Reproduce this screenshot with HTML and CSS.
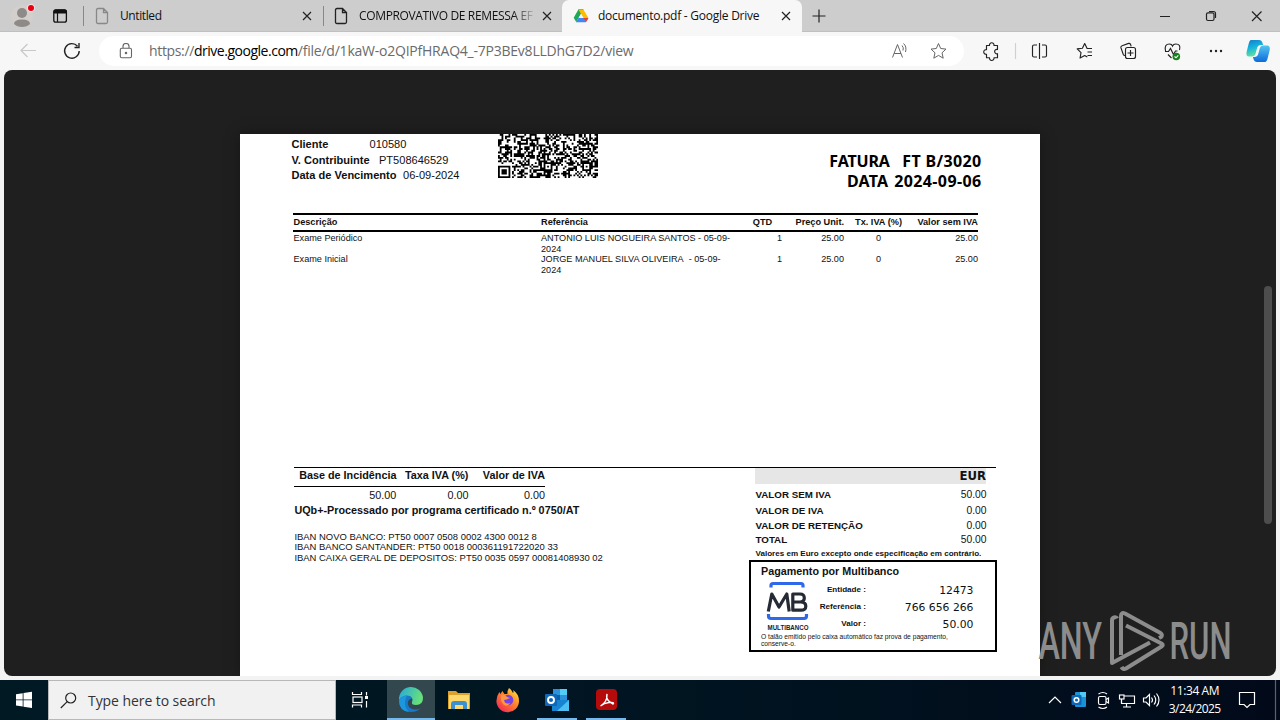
FILE: index.html
```html
<!DOCTYPE html>
<html lang="en">
<head>
<meta charset="utf-8">
<title>documento.pdf - Google Drive</title>
<link rel="stylesheet" href="styles.css">
</head>
<body>
<header class="tabs">
  <svg class="profile" width="50" height="32" viewBox="0 0 50 32"><circle cx="22" cy="16" r="11" fill="#d2cfcd"/><circle cx="22" cy="13" r="5" fill="#8d8a87"/><path d="M14 24q0-4.500 8-4.500t8 4.500q-3 3-8 3t-8-3z" fill="#8d8a87"/><circle cx="31" cy="8" r="4.200" fill="#f2dcdc"/><circle cx="31" cy="8" r="3" fill="#e60012"/></svg>
  <svg class="workspaces" width="33" height="32" viewBox="50 0 33 32"><rect x="53.800" y="9.800" width="12.600" height="12.400" rx="2" fill="none" stroke="#111" stroke-width="1.300"/><path d="M54 13V11.500q0-1.500 1.500-1.500h9.500q1.500 0 1.500 1.500V13z" fill="#111" stroke="#111"/><path d="M57.500 13v9" stroke="#111" stroke-width="1.200"/></svg>
  <div class="tab tab-first">
    <svg class="doc faded" width="14" height="18" viewBox="0 0 14 18"><path d="M1.500 3q0-1.500 1.500-1.500h5.500l4 4V15q0 1.500-1.500 1.500H3Q1.500 16.500 1.500 15zM8.500 1.500v4h4"/></svg>
    <span class="tab-title t-untitled">Untitled</span>
    <svg class="close" width="10" height="10" viewBox="0 0 10 10"><path d="M1 1l8 8M9 1L1 9"/></svg>
  </div>
  <div class="tab tab-second">
    <svg class="doc" width="14" height="18" viewBox="0 0 14 18"><path d="M1.500 3q0-1.500 1.500-1.500h5.500l4 4V15q0 1.500-1.500 1.500H3Q1.500 16.500 1.500 15zM8.500 1.500v4h4"/></svg>
    <span class="tab-title t-comp">COMPROVATIVO DE REMESSA EF</span>
    <svg class="close" width="10" height="10" viewBox="0 0 10 10"><path d="M1 1l8 8M9 1L1 9"/></svg>
  </div>
  <div class="tab tab-active">
    <svg class="drive" width="16" height="14" viewBox="0 0 16 14"><path d="M5.400.500h5L8 4.800 3.200 13 .7 8.800z" fill="#1fa855"/><path d="M5.400.500h5L8 4.800z" fill="#188038"/><path d="M10.400.500l5 8.500h-5L5.400.500z" fill="#fbbc04"/><path d="M15.400 9l-2.500 4.300h-10L5.400 9z" fill="#4285f4"/><path d="M15.400 9l-2 3.500L10.400 9z" fill="#ea4335"/><path d="M8 5l2.400 4h-4.800z" fill="#f7f7f7"/></svg>
    <span class="tab-title t-drive">documento.pdf - Google Drive</span>
    <svg class="close" width="10" height="10" viewBox="0 0 10 10"><path d="M1 1l8 8M9 1L1 9"/></svg>
  </div>
  <svg class="plus" width="14" height="14" viewBox="0 0 14 14"><path d="M7 .5v13M.5 7h13"/></svg>
  <svg class="winctl" width="140" height="32" viewBox="1140 0 140 32"><path d="M1160 16.500h10M1252 11.500l9.500 9.500M1261.500 11.500l-9.500 9.500"/><rect x="1206.500" y="12.800" width="7.500" height="7.700" rx="1.500"/><path d="M1209 11.500h4.500q2 0 2 2v4.500"/></svg>
</header>

<nav class="toolbar">
  <svg class="nav-icons" width="99" height="38" viewBox="0 32 99 38" fill="none"><path d="M36 50.500H21m6.500-6.500L21 50.500l6.500 6.500" stroke="#c8c8c8" stroke-width="1.200"/><path d="M77.500 46.200A7.300 7.300 0 1 0 79.200 51M79 43v4.500h-4.500" stroke="#222" stroke-width="1.400"/></svg>
  <div class="address">
    <svg width="14" height="16" viewBox="0 0 14 16" fill="none" stroke="#666" stroke-width="1.100"><rect x="1.300" y="5.300" width="11.200" height="9.400" rx="1.500"/><path d="M4 5V3.500a3 3 0 0 1 6 0V5"/><circle cx="7" cy="10" r=".7" fill="#666"/></svg>
    <div class="url"><span class="u1">https://</span><span class="host">drive.google.com</span><span class="u2">/file/d/1kaW-o2QIPfHRAQ4_-7P3BEv8LLDhG7D2/view</span></div>
    <svg width="60" height="20" viewBox="888 41 60 20" fill="none" stroke="#666"><path d="M891.500 57.500l5-13 5 13M893.200 53.500h6.800M901 45.500q2 2 1 5M902.500 43.500q3.500 3 2 8.500"/><path d="M937.500 43.500l2.200 5 5.300.6-4 3.700 1.200 5.400-4.700-2.800-4.700 2.800 1.200-5.400-4-3.700 5.300-.6z" stroke-linejoin="round"/></svg>
  </div>
  <svg class="tool-icons" width="316" height="38" viewBox="964 32 316 38" fill="none" stroke="#222" stroke-width="1.150">
    <defs><linearGradient id="cp1" x1="0" y1="0" x2="0.300" y2="1"><stop stop-color="#1878cc"/><stop offset=".5" stop-color="#13b4dc"/><stop offset="1" stop-color="#65e09f"/></linearGradient><linearGradient id="cp2" x1="0" y1="0" x2="0" y2="1"><stop stop-color="#55c4ef"/><stop offset="1" stop-color="#0d6bdc"/></linearGradient></defs>
    <path d="M986.500 45.500h3a2.300 2.300 0 1 1 4.500 0h3.500v4a2.200 2.200 0 1 0 0 4.200v4h-3.500a2.300 2.300 0 1 1-4.500 0h-3v-3.500a2.300 2.300 0 1 1 0-4.500z" stroke-linejoin="round"/>
    <path d="M1015.500 43v16" stroke="#d0d0d0"/>
    <path d="M1037 45h-3q-1.500 0-1.500 1.500v9q0 1.500 1.500 1.500h3M1042 45h3q1.500 0 1.500 1.500v9q0 1.500-1.500 1.500h-3M1039.500 43v16"/>
    <path d="M1089.500 48.500l-2.500-.3-2.300-4.700-2.300 4.700-5.200.7 3.800 3.700-.9 5.400 4.600-2.500 2.600 1.500M1086.500 48.500h5.500M1087.500 52h4.500M1087.500 55.500h4.500" stroke-linejoin="round"/>
    <path d="M1125 55.500q-1.300-.1-1.800-1.300l-2.300-6.500q-.3-1.500 1.200-2l6.500-2.300q1.400-.3 2 1l.5 2"/><rect x="1125.500" y="47.500" width="10" height="11" rx="2"/><path d="M1130.500 50v6M1127.500 53h6"/>
    <path d="M1165.500 51q-1.500-7 4-7 2.300 0 3 2 .9-2 3.300-2 5.400 0 3.700 6M1165 51.500h3.500l2-3 3 6 2-3.500h2M1168 54.500l3.500 3.500"/><circle cx="1176.300" cy="56.500" r="3.800" fill="#16811b" stroke="none"/><path d="M1174.500 56.500l1.500 1.300 2.300-2.500" stroke="#fff"/>
    <g fill="#222" stroke="none"><circle cx="1211" cy="51" r="1.200"/><circle cx="1216" cy="51" r="1.200"/><circle cx="1221" cy="51" r="1.200"/></g>
    <g stroke="none"><path d="M1251 40h8q2.700 0 3.500 3l.6 2h-2.200q-3 0-3.800 3l-1.500 5.500q-.8 3-3.600 3h-3q-3.200 0-2.400-4.500l2-8q1-4 2.400-4z" fill="url(#cp1)"/><path d="M1265 62h-8q-2.700 0-3.500-3l-.6-2h1.500q3 0 3.800-3l1.500-5.500q.8-3 3.600-3h3.700q3.500 0 2.700 4.500l-2 8q-1 4-2.700 4z" fill="url(#cp2)"/></g>
  </svg>
</nav>

<main class="viewer">
  <article class="page">
    <section class="top">
      <div class="client">
        <p><b class="k-client">Cliente</b><span>010580</span></p>
        <p><b class="k-contrib">V. Contribuinte</b><span>PT508646529</span></p>
        <p><b class="k-due">Data de Vencimento</b><span>06-09-2024</span></p>
      </div>
      <svg class="qr" id="qr" width="100" height="44" viewBox="0 32 57 25" preserveAspectRatio="none"></svg>
      <div class="doc-title"><p><span class="ft1">FATURA</span><span class="ft2">FT B/3020</span></p><p><span class="dt1">DATA</span><span class="dt2">2024-09-06</span></p></div>
    </section>
    <section class="items">
      <div class="item head"><span>Descrição</span><span>Referência</span><span class="mid">QTD</span><span class="r">Preço Unit.</span><span class="r">Tx. IVA (%)</span><span class="r">Valor sem IVA</span></div>
      <div class="item"><span>Exame Periódico</span><span>ANTONIO LUIS NOGUEIRA SANTOS - 05-09-<br>2024</span><span class="r qty">1</span><span class="r">25.00</span><span class="r tax">0</span><span class="r">25.00</span></div>
      <div class="item"><span>Exame Inicial</span><span>JORGE MANUEL SILVA OLIVEIRA&nbsp; - 05-09-<br>2024</span><span class="r qty">1</span><span class="r">25.00</span><span class="r tax">0</span><span class="r">25.00</span></div>
    </section>
    <section class="bottom">
      <div class="left">
        <div class="vat head"><b>Base de Incidência</b><b>Taxa IVA (%)</b><b>Valor de IVA</b></div>
        <div class="vat"><span>50.00</span><span>0.00</span><span>0.00</span></div>
        <p class="cert">UQb+-Processado por programa certificado n.º 0750/AT</p>
        <div class="iban">IBAN NOVO BANCO: PT50 0007 0508 0002 4300 0012 8<br>IBAN BANCO SANTANDER: PT50 0018 000361191722020 33<br>IBAN CAIXA GERAL DE DEPOSITOS: PT50 0035 0597 00081408930 02</div>
      </div>
      <div class="right">
        <div class="eur">EUR</div>
        <div class="totals">
          <p><b>VALOR SEM IVA</b><span>50.00</span></p>
          <p><b>VALOR DE IVA</b><span>0.00</span></p>
          <p><b>VALOR DE RETENÇÃO</b><span>0.00</span></p>
          <p class="last"><b>TOTAL</b><span>50.00</span></p>
        </div>
        <p class="note">Valores em Euro excepto onde especificação em contrário.</p>
        <div class="pay">
          <h2>Pagamento por Multibanco</h2>
          <div class="pay-body">
            <svg class="mb" width="44" height="51" viewBox="0 0 44 51"><path d="M5 7.500V5.500q0-2 2-2h28q2 0 2 2v2M2.500 34v2q0 2.500 2.500 2.500h33q2.500 0 2.500-2.500v-2" fill="none" stroke="#2f68e8" stroke-width="3.200"/><path d="M2.300 31.500L5.800 14 13 27 20.800 14l2.400 17.500M26.800 14h7.200q4.300 0 4.300 4t-4.300 4h-7.200h8q5 0 5 4.200t-5 4h-8z" fill="none" stroke="#262a35" stroke-width="3.200" stroke-linejoin="round"/><text x="1.500" y="50" textLength="41" lengthAdjust="spacingAndGlyphs" class="mbt">MULTIBANCO</text></svg>
            <div class="pay-rows"><p><b>Entidade :</b><span>12473</span></p><p><b>Referência :</b><span>766 656 266</span></p><p><b>Valor :</b><span>50.00</span></p></div>
          </div>
          <p class="foot">O talão emitido pelo caixa automático faz prova de pagamento,<br>conserve-o.</p>
        </div>
      </div>
    </section>
  </article>
  <div class="thumb"></div>
  <svg class="watermark" width="220" height="70" viewBox="1030 606 220 70">
    <g class="wm"><text x="1038.500" y="659" textLength="63.500" lengthAdjust="spacingAndGlyphs">ANY</text><text x="1169.500" y="659" textLength="62" lengthAdjust="spacingAndGlyphs">RUN</text></g>
    <g fill="none" stroke="#8c8c8c" stroke-width="4" stroke-linejoin="round"><path d="M1117 618.500q-.5-1.500-3-1-2 .5-2 3V663l38-20.500"/><path d="M1121 655v-39q0-4 4-2.500l35.500 19.500q2.500 2 .5 4l-2 1"/><path d="M1126 625.500l35.500 18q2.500 1.500 0 3L1126 668.500q-3 1.500-4.500-1.500"/></g>
  </svg>
</main>

<footer class="taskbar">
  <svg class="start" width="48" height="40" viewBox="0 0 48 40"><path d="M16 14.200l6.700-1v6.200H16zM23.500 13l8.500-1.200v7.600h-8.500zM16 20.300h6.700v6.200l-6.700-1zM23.500 20.300H32v7.700l-8.500-1.200z" fill="#fff"/></svg>
  <div class="search"><svg width="17" height="17" viewBox="0 0 17 17" fill="none" stroke="#222" stroke-width="1.200"><circle cx="10.700" cy="6" r="5"/><path d="M7.200 9.600L.8 16"/></svg><span>Type here to search</span></div>
  <div class="app"><svg width="48" height="40" viewBox="336 680 48 40" fill="none" stroke="#fff" stroke-width="1.200"><path d="M352.500 692v2.500h9V692M352.500 707.500V705h9v2.500M366.500 692v3.500M366.500 701v6.500"/><rect x="353" y="697" width="9" height="5.500"/><path d="M366.500 696v3" stroke-width="3"/></svg></div>
  <div class="app on"><svg width="48" height="40" viewBox="0 0 48 40"><defs><linearGradient id="ed" x2="1" y2=".3"><stop stop-color="#25a7df"/><stop offset="1" stop-color="#67df7b"/></linearGradient></defs><path d="M12 20a12 12 0 0 1 24-2q0 7-7 7-5 0-4-3 2-5-4-6-6 0-9 4z" fill="url(#ed)"/><path d="M12 20q3-4.500 8-4.500 4 0 5 3-5 1-4 6t8 5q3 0 5-1.500Q30 32 24 32q-12-1-12-12z" fill="#1679ca"/><path d="M19 18q-3 8 3 14-10-1-10-12 3-4.500 8-4.500z" fill="#1c96dc"/></svg></div>
  <div class="app"><svg width="48" height="40" viewBox="0 0 48 40"><path d="M13 11h8l2 2h12v16H13z" fill="#dda22c"/><path d="M14 15h20v14H14z" fill="#ffd76b"/><path d="M16 29v-5q0-3 3-3h10q3 0 3 3v5h-4v-4h-8v4z" fill="#3b91d0"/></svg></div>
  <div class="app"><svg width="48" height="40" viewBox="0 0 48 40"><defs><linearGradient id="ff" x1="1" x2=".2" y2="1"><stop stop-color="#fff44a"/><stop offset=".45" stop-color="#ff8b28"/><stop offset="1" stop-color="#f22758"/></linearGradient></defs><path d="M25 8q2 1 4 5 1-1 0-3 6 4 6 11a11.300 11.300 0 0 1-22.600 0q0-5 3-9l1 2 2-3 2 3h3q0-4 1.600-6z" fill="url(#ff)"/><circle cx="24" cy="20" r="5.300" fill="#7542e5"/><path d="M17 15q4-1 6 2l3 1q-4 2-6 2 1 5 6 3-2 4-6 2-4-3-3-10z" fill="#ff9640"/></svg></div>
  <div class="app"><svg width="48" height="40" viewBox="0 0 48 40"><path d="M20 9h14v11H20z" fill="#2c92dc"/><path d="M27 9h7v6h-7z" fill="#52cdf7"/><path d="M20 15h7v6h-7z" fill="#0b5ea8"/><path d="M19 20h17v11H19z" fill="#1784d1"/><path d="M36 20v11H24z" fill="#4cc0f0"/><rect x="12" y="14" width="12" height="12" rx="1" fill="#0d68ba"/><circle cx="18" cy="20" r="3" fill="none" stroke="#fff" stroke-width="1.900"/></svg><i></i></div>
  <div class="app"><svg width="50" height="40" viewBox="0 0 50 40"><rect x="14" y="9" width="21" height="21" rx="4" fill="#b60b0b"/><path d="M18.500 26q7-4 6.500-12-2 6 6 10 2-2-4-1.500-5 .5-8.500 3.500z" fill="none" stroke="#fff" stroke-width="1.400"/></svg><i></i></div>
  <svg class="tray" width="120" height="40" viewBox="1044 680 120 40" fill="none" stroke="#fff" stroke-width="1.150"><path d="M1049 703l6-6 6 6"/><rect x="1075" y="692" width="11" height="15" rx="1" fill="#1993d8" stroke="none"/><path d="M1080 692h6v5h-6z" fill="#4fcaf5" stroke="none"/><rect x="1071.500" y="695" width="10" height="10" rx="1" fill="#0c66b8" stroke="none"/><circle cx="1076.500" cy="700" r="2.300" stroke-width="1.500"/><rect x="1098.500" y="696.500" width="7.500" height="8" rx="1.500"/><path d="M1106 699.500l2.500-1.500v5l-2.500-1.500M1098.500 694q4.500-3 8.500 0M1098.500 707q4.500 3 8.500 0"/><path d="M1124 696h10.500v7.500h-13V700M1126.500 704v3M1123 707h8"/><rect x="1119.500" y="695" width="4.500" height="4" /><path d="M1121.500 699v4"/><path d="M1143.500 698h2.500l3.500-3.500v11L1146 702h-2.500zM1151.500 697.500q2 2.500 0 5M1154 695.500q3.500 4.500 0 9M1156.500 693.500q5 6.500 0 13"/></svg>
  <div class="clock"><span class="time">11:34 AM</span><span class="date">3/24/2025</span></div>
  <svg class="notif" width="56" height="40" viewBox="0 0 56 40" fill="none" stroke="#fff" stroke-width="1.200"><path d="M15.500 12.500h15v12H26l-3 3-3-3h-4.500z"/><path d="M51.500 0v40" stroke="#59636b"/></svg>
</footer>
<script src="qr.js"></script>
</body>
</html>
```
FILE: styles.css
```css
* { box-sizing: border-box; }
body { margin: 0; width: 1280px; height: 720px; overflow: hidden; display: flex; flex-direction: column; background: #f3f3f3; font-family: "Open Sans", "Noto Sans", sans-serif; }
p, h2 { margin: 0; }
svg { display: block; flex: none; }

.tabs { display: flex; align-items: center; height: 32px; flex: none; background: #cdcdcd; border-bottom: 1px solid #c0c0c0; }
.tab { display: flex; align-items: center; height: 32px; flex: none; font-size: 12px; color: #111; }
.tab-title { flex: none; white-space: nowrap; overflow: hidden; line-height: 18px; }
.tab-first { width: 240px; padding-left: 12px; background: linear-gradient(#888, #888) 0 50% / 1px 20px no-repeat; }
.tab-second { width: 239px; padding-left: 11px; background: linear-gradient(#888, #888) 0 50% / 1px 20px no-repeat; }
.tab-active { width: 240px; padding-left: 11px; background: #f7f7f7; border-radius: 7px 7px 0 0; }
.tab-first .tab-title { width: 182px; margin-left: 11px; }
.tab-second .tab-title { width: 183px; margin-left: 11px; -webkit-mask: linear-gradient(90deg, #000 84%, transparent 97%); mask: linear-gradient(90deg, #000 84%, transparent 97%); }
.tab-active .tab-title { width: 183px; margin-left: 9px; }
.t-untitled { letter-spacing: -0.4px; }
.t-comp { letter-spacing: -0.35px; }
.t-drive { letter-spacing: -0.25px; }
.doc { fill: none; stroke: #222; stroke-width: 1.3; }
.doc.faded { stroke: #888; }
.close, .plus, .winctl { fill: none; stroke: #222; stroke-width: 1.2; }
.plus { margin-left: 10px; }
.winctl { margin-left: auto; }

.toolbar { display: flex; height: 38px; flex: none; background: #f7f7f7; }
.address { display: flex; align-items: center; width: 865px; height: 30px; margin-top: 4px; padding: 0 15.500px 0 20px; background: #fff; border-radius: 15px; }
.url { flex: 1; margin-left: 16px; font-size: 14px; line-height: 20px; white-space: nowrap; color: #6b6b6b; }
.u1 { letter-spacing: -0.35px; }
.url .host { color: #000; letter-spacing: -0.48px; }
.u2 { letter-spacing: -0.23px; }

.viewer { position: relative; flex: none; height: 606px; margin: 0 4px; padding: 64px 0 0 236px; overflow: hidden; background: #1f1f1f; border-radius: 8px; }
.page { display: flex; flex-direction: column; width: 800px; height: 542px; background: #fff; color: #111; font-family: "Liberation Sans", Arial, sans-serif; box-shadow: 0 0 12px #1119; }
.thumb { position: absolute; left: 1260px; top: 216px; width: 8px; height: 238px; border-radius: 4px; background: #4d4d4d; }
.watermark { position: absolute; left: 1026px; top: 536px; }
.wm { font: 500 52px "Roboto", sans-serif; fill: #8c8c8c; }

.top { display: flex; height: 79px; }
.client { width: 258px; padding: 3px 0 0 51.500px; font-size: 11.050px; }
.client p { display: flex; height: 15.500px; line-height: 14.600px; white-space: nowrap; }
.k-client { width: 78px; }
.k-contrib { width: 87.500px; }
.k-due { width: 111.500px; }
.qr { background: #fff; }
.doc-title { width: 383.500px; padding-top: 16.500px; text-align: right; font: bold 16px/20px "Noto Sans", sans-serif; white-space: nowrap; color: #000; }
.ft1 { letter-spacing: -0.15px; }
.ft2 { margin-left: 12.500px; letter-spacing: 0.35px; }
.dt1 { letter-spacing: 0.2px; }
.dt2 { margin-left: 6px; letter-spacing: 0.38px; }

.items { width: 685px; margin-left: 53px; font-size: 9.120px; border-top: 2px solid #000; }
.item { display: grid; grid-template-columns: 247.500px 195px 49px 59px 58px 76px; padding-left: 0.500px; line-height: 10.600px; height: 21.200px; white-space: nowrap; }
.item.head { height: 17px; line-height: 15.500px; font-size: 9.200px; font-weight: bold; border-bottom: 2px solid #000; margin-bottom: 1px; }
.r { text-align: right; }
.mid { text-align: center; }
.qty { padding-right: 3px; }
.tax { padding-right: 21px; }
.item.head .mid { padding-left: 4px; }

.bottom { display: flex; width: 702px; margin: auto 0 0 54px; height: 209.500px; border-top: 1.500px solid #000; }
.left { width: 455px; padding-left: 0.400px; }
.vat { display: grid; grid-template-columns: 102px 72px 76.600px; width: 251px; height: 16px; line-height: 16px; font-size: 10.800px; text-align: right; white-space: nowrap; }
.vat.head { height: 19px; line-height: 15px; border-bottom: 1.500px solid #000; }
.cert { font-weight: bold; font-size: 10.800px; line-height: 15px; white-space: nowrap; }
.iban { margin-top: 14px; font-size: 9.450px; line-height: 10.600px; white-space: nowrap; }
.right { width: 247px; flex: none; }
.eur { width: 231px; height: 16px; margin-left: 6px; background: #e6e6e6; font: bold 11.700px/17px "DejaVu Sans", sans-serif; text-align: right; }
.totals { width: 231px; margin: 3.500px 0 0 6.500px; font-size: 9.780px; }
.totals p { display: flex; justify-content: space-between; height: 15.500px; line-height: 15.500px; }
.totals span { font-size: 10.300px; }
.totals .last { height: 13px; line-height: 12.500px; }
.note { margin-left: 6.500px; font-size: 8.070px; font-weight: bold; line-height: 13.500px; white-space: nowrap; }
.pay { width: 248px; height: 92px; border: 2px solid #000; padding: 2px 0 0 10px; }
.pay h2 { font-size: 10.750px; line-height: 15px; }
.pay-body { display: flex; height: 52px; }
.mb { margin: 1px 0 0 5px; }
.mbt { font: bold 6.500px "Liberation Sans", sans-serif; fill: #222; }
.pay-rows { padding-top: 3px; }
.pay-rows p { display: flex; height: 17px; line-height: 16px; }
.pay-rows b { width: 56px; text-align: right; font-size: 8.100px; }
.pay-rows span { width: 107.500px; text-align: right; font: 10.800px/17px "DejaVu Sans", sans-serif; }
.foot { font-size: 6.680px; line-height: 7px; white-space: nowrap; margin-top: 2px; }

.taskbar { display: flex; height: 40px; margin-top: 4px; flex: none; background: linear-gradient(90deg, #001923, #001521 50%, #020a1a); }
.search { display: flex; align-items: center; width: 288px; height: 40px; padding-left: 11px; background: #f1f1f1; border: 1px solid #b8b8b8; color: #333; font-size: 14px; }
.search span { margin-left: 11px; letter-spacing: -0.07px; }
.app { position: relative; width: 49px; height: 40px; flex: none; }
.app:nth-child(3) { width: 51px; }
.app.on { background: #33474f; border-bottom: 2px solid #76b9ed; width: 48px; }
.app i { position: absolute; left: 4px; bottom: 0; width: 40px; height: 2px; background: #76b9ed; }
.tray { margin-left: auto; }
.clock { display: flex; flex-direction: column; align-items: center; width: 60px; padding: 2px 0 0 1.500px; color: #fff; font-size: 12px; line-height: 18px; white-space: nowrap; }
.time { letter-spacing: -0.4px; }
.date { letter-spacing: -0.55px; }
```
FILE: qr.js
```js
const size = 57;
let seed = 508646529;
const random = () => {
  seed ^= seed << 13;
  seed ^= seed >>> 17;
  seed ^= seed << 5;
  return (seed >>> 9) % 100 < 50;
};
const ring = (x, y, cx, cy) => Math.max(Math.abs(x - cx), Math.abs(y - cy));
let d = "";
for (let y = 32; y < size; y++) {
  for (let x = 0; x < size; x++) {
    let on = random();
    const finder = ring(x, y, 3, 53);
    if (finder <= 4) on = finder < 2 || finder === 3;
    for (const cx of [28, 50]) {
      const a = ring(x, y, cx, 50);
      if (a <= 2) on = a !== 1;
    }
    if (on) d += `M${x} ${y}h1.04v1.04h-1.04z`;
  }
}
const path = document.createElementNS("http://www.w3.org/2000/svg", "path");
path.setAttribute("d", d);
document.getElementById("qr").append(path);
```
